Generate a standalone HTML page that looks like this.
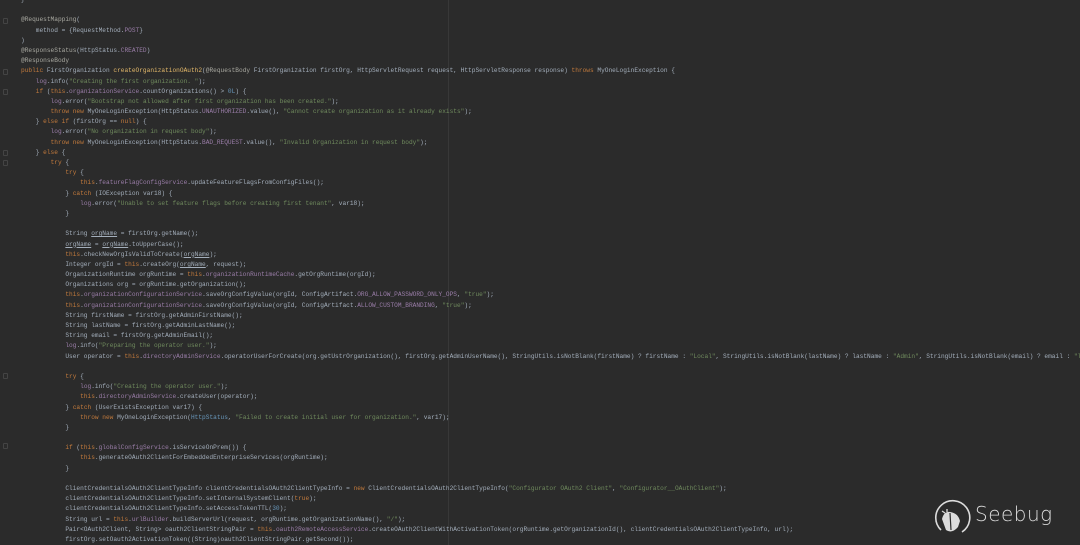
<!DOCTYPE html>
<html><head><meta charset="utf-8"><style>
html,body{margin:0;padding:0;background:#2b2b2b;width:1080px;height:545px;overflow:hidden}
#code{position:absolute;left:21px;top:-5px;font-family:"Liberation Mono",monospace;font-size:6.17px;line-height:10.18px;white-space:pre;color:#a3aebb;letter-spacing:0}
.k{color:#c27a3c}.s{color:#6f8a5d}.a{color:#a8a8a0}.m{color:#e3b86a}.f{color:#9a7da8}.n{color:#6897bb}.u{text-decoration:underline}
#margin{position:absolute;left:448px;top:0;width:1px;height:545px;background:#383838}
.g{position:absolute;left:3px;width:3px;height:4px;border:1px solid #444;border-radius:1px}
#logo{position:absolute;left:932px;top:497px}
#logotext{position:absolute;left:975px;top:502px;font-family:"DejaVu Sans","Liberation Sans",sans-serif;font-size:20px;color:#dcdcdc;font-weight:300;letter-spacing:0.5px}
</style></head><body>
<div id="margin"></div>
<div class="g" style="top:18px"></div><div class="g" style="top:69px"></div><div class="g" style="top:89px"></div><div class="g" style="top:150px"></div><div class="g" style="top:160px"></div><div class="g" style="top:373px"></div><div class="g" style="top:443px"></div>
<div id="code">}

<span class="a">@RequestMapping</span>(
    method = {RequestMethod.<span class="f">POST</span>}
)
<span class="a">@ResponseStatus</span>(HttpStatus.<span class="f">CREATED</span>)
<span class="a">@ResponseBody</span>
<span class="k">public</span> FirstOrganization <span class="m">createOrganizationOAuth2</span>(<span class="a">@RequestBody</span> FirstOrganization firstOrg, HttpServletRequest request, HttpServletResponse response) <span class="k">throws</span> MyOneLoginException {
    <span class="f">log</span>.info(<span class="s">"Creating the first organization. "</span>);
    <span class="k">if</span> (<span class="k">this</span>.<span class="f">organizationService</span>.countOrganizations() &gt; <span class="n">0L</span>) {
        <span class="f">log</span>.error(<span class="s">"Bootstrap not allowed after first organization has been created."</span>);
        <span class="k">throw new</span> MyOneLoginException(HttpStatus.<span class="f">UNAUTHORIZED</span>.value(), <span class="s">"Cannot create organization as it already exists"</span>);
    } <span class="k">else if</span> (firstOrg == <span class="k">null</span>) {
        <span class="f">log</span>.error(<span class="s">"No organization in request body"</span>);
        <span class="k">throw new</span> MyOneLoginException(HttpStatus.<span class="f">BAD_REQUEST</span>.value(), <span class="s">"Invalid Organization in request body"</span>);
    } <span class="k">else</span> {
        <span class="k">try</span> {
            <span class="k">try</span> {
                <span class="k">this</span>.<span class="f">featureFlagConfigService</span>.updateFeatureFlagsFromConfigFiles();
            } <span class="k">catch</span> (IOException var18) {
                <span class="f">log</span>.error(<span class="s">"Unable to set feature flags before creating first tenant"</span>, var18);
            }

            String <span class="u">orgName</span> = firstOrg.getName();
            <span class="u">orgName</span> = <span class="u">orgName</span>.toUpperCase();
            <span class="k">this</span>.checkNewOrgIsValidToCreate(<span class="u">orgName</span>);
            Integer orgId = <span class="k">this</span>.createOrg(<span class="u">orgName</span>, request);
            OrganizationRuntime orgRuntime = <span class="k">this</span>.<span class="f">organizationRuntimeCache</span>.getOrgRuntime(orgId);
            Organizations org = orgRuntime.getOrganization();
            <span class="k">this</span>.<span class="f">organizationConfigurationService</span>.saveOrgConfigValue(orgId, ConfigArtifact.<span class="f">ORG_ALLOW_PASSWORD_ONLY_OPS</span>, <span class="s">"true"</span>);
            <span class="k">this</span>.<span class="f">organizationConfigurationService</span>.saveOrgConfigValue(orgId, ConfigArtifact.<span class="f">ALLOW_CUSTOM_BRANDING</span>, <span class="s">"true"</span>);
            String firstName = firstOrg.getAdminFirstName();
            String lastName = firstOrg.getAdminLastName();
            String email = firstOrg.getAdminEmail();
            <span class="f">log</span>.info(<span class="s">"Preparing the operator user."</span>);
            User operator = <span class="k">this</span>.<span class="f">directoryAdminService</span>.operatorUserForCreate(org.getUstrOrganization(), firstOrg.getAdminUserName(), StringUtils.isNotBlank(firstName) ? firstName : <span class="s">"Local"</span>, StringUtils.isNotBlank(lastName) ? lastName : <span class="s">"Admin"</span>, StringUtils.isNotBlank(email) ? email : <span class="s">"local"</span>

            <span class="k">try</span> {
                <span class="f">log</span>.info(<span class="s">"Creating the operator user."</span>);
                <span class="k">this</span>.<span class="f">directoryAdminService</span>.createUser(operator);
            } <span class="k">catch</span> (UserExistsException var17) {
                <span class="k">throw new</span> MyOneLoginException(<span class="n">HttpStatus</span>, <span class="s">"Failed to create initial user for organization."</span>, var17);
            }

            <span class="k">if</span> (<span class="k">this</span>.<span class="f">globalConfigService</span>.isServiceOnPrem()) {
                <span class="k">this</span>.generateOAuth2ClientForEmbeddedEnterpriseServices(orgRuntime);
            }

            ClientCredentialsOAuth2ClientTypeInfo clientCredentialsOAuth2ClientTypeInfo = <span class="k">new</span> ClientCredentialsOAuth2ClientTypeInfo(<span class="s">"Configurator OAuth2 Client"</span>, <span class="s">"Configurator__OAuthClient"</span>);
            clientCredentialsOAuth2ClientTypeInfo.setInternalSystemClient(<span class="k">true</span>);
            clientCredentialsOAuth2ClientTypeInfo.setAccessTokenTTL(<span class="n">30</span>);
            String url = <span class="k">this</span>.<span class="f">urlBuilder</span>.buildServerUrl(request, orgRuntime.getOrganizationName(), <span class="s">"/"</span>);
            Pair&lt;OAuth2Client, String&gt; oauth2ClientStringPair = <span class="k">this</span>.<span class="f">oauth2RemoteAccessService</span>.createOAuth2ClientWithActivationToken(orgRuntime.getOrganizationId(), clientCredentialsOAuth2ClientTypeInfo, url);
            firstOrg.setOauth2ActivationToken((String)oauth2ClientStringPair.getSecond());</div>
<svg id="logo" width="40" height="40" viewBox="0 0 40 40">
<path d="M9 33 A17 17 0 1 1 30 35" fill="none" stroke="#dcdcdc" stroke-width="1.6"/>
<path d="M13 16 L10 14 M15 15 L15 12" stroke="#dcdcdc" stroke-width="1.3"/>
<path d="M10 22 Q12 14 18 15 Q26 16 28 24 L26 30 Q20 37 14 33 Z" fill="#dcdcdc"/>
<path d="M18 16 L19 33" stroke="#2b2b2b" stroke-width="1.2"/>
</svg>
<div id="logotext">Seebug</div>
</body></html>
